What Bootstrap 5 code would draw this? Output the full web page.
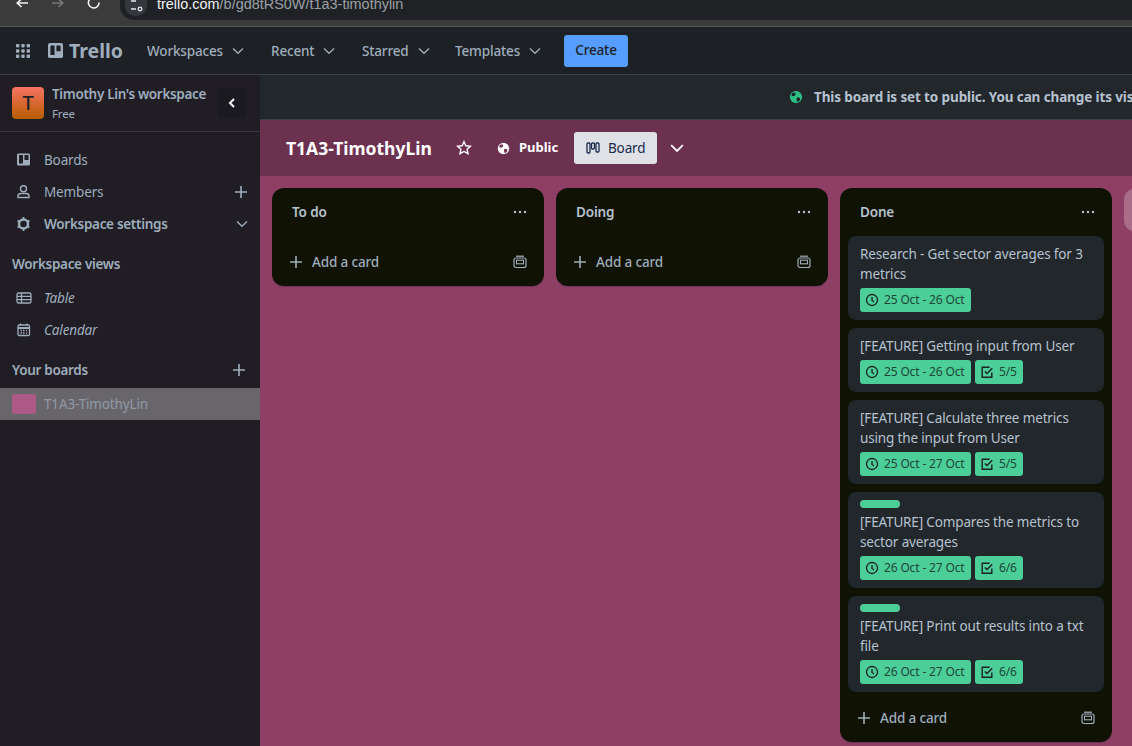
<!DOCTYPE html>
<html lang="en">
<head>
<meta charset="UTF-8">
<meta name="viewport" content="width=device-width, initial-scale=1.0">
<title>T1A3-TimothyLin | Trello</title>
<link href="https://cdn.jsdelivr.net/npm/bootstrap@5.3.3/dist/css/bootstrap.min.css" rel="stylesheet">
<style>
html, body { height: 100%; }
body { font-family: "Noto Sans", "Liberation Sans", sans-serif; font-size: 13.5px; letter-spacing: -.15px; background: #1d2125; color: #9fadbc; overflow: hidden; }
svg { display: block; flex: none; }
.app-shell { width: 1132px; height: 746px; }

.browser-bar { height: 27px; background: #3b3b3b; border-bottom: 1px solid #5a5a5a; padding-left: 15px; }
.browser-btns { width: 105px; gap: 22px; height: 10px; }
.url-pill { background: #1f2124; height: 20px; border-radius: 0 0 0 14px; padding-left: 5px; color: #9aa0a6; font-family: "Liberation Sans", sans-serif; font-size: 14.45px; line-height: 8px; letter-spacing: 0; }
.url-badge { width: 22px; height: 16px; background: #34373b; border-radius: 0 0 10px 10px; margin-right: 10px; padding-left: 5px; }
.url-text { margin-top: -4px; height: 16px; line-height: 16px; }
.url-host { color: #f1f3f4; }

.top-bar { height: 48px; background: #1d2125; border-bottom: 1px solid #38414a; padding-left: 15px; font-weight: 500; }
.trello-mark { color: #9fadbc; font-size: 19.5px; font-weight: 700; margin-left: 17px; margin-right: 24px; gap: 6px; width: 75px; letter-spacing: 0; }
.top-item { gap: 9px; color: #9fadbc; white-space: nowrap; padding-top: 2px; }
.top-item.ws { width: 124px; } .top-item.rc { width: 91px; } .top-item.st { width: 93px; } .top-item.tp { width: 109px; }
.top-item svg { margin-top: -1px; }
.create-btn { background: #579dff; color: #1d2125; width: 64px; height: 32px; border-radius: 3px; font-size: 13.5px; font-weight: 500; padding: 0; border: 0; letter-spacing: -.15px; }

.side-nav { width: 260px; flex: none; background: #201d25; height: 100%; }
.side-head { height: 57px; border-bottom: 1px solid #38353f; padding: 0 14px 0 12px; }
.ws-avatar { width: 32px; height: 32px; border-radius: 4px; background: linear-gradient(#f87462, #b65c02); color: #1d2125; font-size: 20px; line-height: 32px; text-align: center; font-weight: 500; flex: none; }
.ws-name { font-weight: 600; font-size: 13.5px; line-height: 20px; color: #9fadbc; white-space: nowrap; letter-spacing: -.33px; padding-top: 1px; }
.ws-plan { font-size: 11.5px; line-height: 20px; color: #9fadbc; }
.collapse-btn { width: 28px; height: 30px; background: #1b1a20; border-radius: 3px; color: #fff; margin-left: auto; }
.nav-list { padding-top: 12px; }
.nav-row { height: 32px; padding-left: 16px; padding-right: 12px; gap: 12px; color: #9fadbc; }
.nav-row.strong { font-weight: 600; letter-spacing: -.3px; }
.nav-row .nav-end { margin-left: auto; }
.nav-title { font-weight: 600; height: 32px; padding: 0 14px 0 12px; color: #9fadbc; letter-spacing: -.3px; }
.views-title { margin-top: 8px; margin-bottom: 2px; }
.boards-title { margin-top: 8px; margin-bottom: 2px; }
.views-row { font-style: italic; height: 32px; padding-left: 16px; gap: 12px; color: #9fadbc; }
.board-row { height: 32px; background: #69666b; padding-left: 12px; gap: 8px; color: #8f9aa5; }
.board-swatch { width: 24px; height: 20px; border-radius: 2px; background: #ad5a86; }

.public-bar { height: 45px; flex: none; background: #22272b; border-bottom: 1px solid #38414a; padding-left: 529px; gap: 11px; font-weight: 700; font-size: 13.5px; letter-spacing: -.12px; white-space: nowrap; overflow: hidden; color: #b6c2cf; }
.public-globe { color: #2dbe83; }
.board-area { background: #8f3f65; min-width: 0; }
.board-head { height: 56px; flex: none; background: #6d3150; padding-left: 26px; color: #fff; }
.board-name { font-size: 17.5px; font-weight: 700; width: 170px; white-space: nowrap; letter-spacing: 0; }
.board-public { font-weight: 700; font-size: 13px; gap: 9px; width: 69px; margin-left: 25px; letter-spacing: 0; }
.board-tab { background: #dfe1e6; color: #172b4d; width: 83px; height: 32px; border-radius: 3px; padding-left: 12px; gap: 8px; }
.board-more { margin-left: 13px; }

.lists { padding: 12px 12px 0; gap: 12px; overflow: hidden; }
.task-list { width: 272px; flex: none; background: #101204; border-radius: 12px; box-shadow: 0 1px 1px rgba(9,30,66,.3); align-self: flex-start; }
.list-head { height: 48px; padding: 0 17px 0 20px; font-weight: 600; color: #b6c2cf; }
.list-foot { height: 36px; margin: 8px 0 6px; padding: 0 17px; gap: 9px; font-weight: 500; color: #9fadbc; }
.list-foot .foot-tpl { margin-left: auto; }
.task-stack { padding: 0 8px; gap: 8px; }
.task-card { background: #22272b; border-radius: 8px; padding: 8px 12px; color: #b6c2cf; line-height: 20px; }
.task-label { width: 40px; height: 8px; border-radius: 4px; background: #4bce97; margin-bottom: 4px; }
.task-meta { gap: 4px; margin-top: 4px; }
.date-chip { background: #4bce97; color: #20463a; height: 24px; border-radius: 3px; padding: 0 5px; gap: 5px; font-size: 12px; white-space: nowrap; }
.date-chip svg { color: #1d2125; }
.date-chip.range { width: 111px; }
.date-chip.checks { width: 48px; }
.add-list { width: 272px; height: 44px; flex: none; background: rgba(255,255,255,.24); border-radius: 12px; }
</style>
</head>
<body>
<svg width="0" height="0" class="position-absolute">
  <symbol id="chev" viewBox="0 0 12 12"><path d="M1 3.500 6 8.300l5-4.800" fill="none" stroke="currentColor" stroke-width="1.300"/></symbol>
  <symbol id="plus" viewBox="0 0 14 14"><path d="M7 1v12M1 7h12" stroke="currentColor" stroke-width="1.600"/></symbol>
  <symbol id="clock" viewBox="0 0 16 16"><circle cx="8" cy="8" r="6.300" fill="none" stroke="currentColor" stroke-width="1.500"/><path d="M8 4.500V8.500l2.400 1.600" fill="none" stroke="currentColor" stroke-width="1.500"/></symbol>
  <symbol id="check" viewBox="0 0 16 16"><path d="M13.500 8.500V14H2.500V2.500H11" fill="none" stroke="currentColor" stroke-width="1.600"/><path d="M5.500 7.300 8 9.800l6-6" fill="none" stroke="currentColor" stroke-width="1.600"/></symbol>
  <symbol id="dots" viewBox="0 0 14 4"><circle cx="2" cy="2" r="1.200" fill="currentColor"/><circle cx="7" cy="2" r="1.200" fill="currentColor"/><circle cx="12" cy="2" r="1.200" fill="currentColor"/></symbol>
  <symbol id="tpl" viewBox="0 0 14 14"><path d="M3 1.200h8" stroke="currentColor" stroke-width="1.200"/><rect x="1" y="3" width="12" height="9.500" rx="2" fill="none" stroke="currentColor" stroke-width="1.200"/><rect x="3.500" y="5.200" width="7" height="3.600" fill="none" stroke="currentColor" stroke-width="1.100"/></symbol>
  <symbol id="globe" viewBox="0 0 16 16"><circle cx="8" cy="8" r="7" fill="currentColor"/><path d="M4 3.200 6.800 3l1 1.600L6.600 6.500 4.600 7 2.600 6.300ZM9.200 8.400l3.200.6.400 2-2.200 2.500-1.400-.3-.6-2.600Z" fill="#1d2125"/></symbol>
  <symbol id="globe-light" viewBox="0 0 16 16"><circle cx="8" cy="8" r="7" fill="currentColor"/><path d="M4 3.200 6.800 3l1 1.600L6.600 6.500 4.600 7 2.600 6.300ZM9.200 8.400l3.200.6.400 2-2.200 2.500-1.400-.3-.6-2.600Z" fill="#6d3150"/></symbol>
  <symbol id="logo" viewBox="0 0 16 16"><rect width="16" height="16" rx="2" fill="currentColor"/><rect x="2.600" y="2.600" width="4.400" height="10.200" rx=".6" fill="#1d2125"/><rect x="9" y="2.600" width="4.400" height="6.200" rx=".6" fill="#1d2125"/></symbol>
</svg>

<div class="app-shell d-flex flex-column">
  <div class="browser-bar d-flex flex-none">
    <div class="browser-btns d-flex">
      <svg width="14" height="10" viewBox="0 0 14 10"><path d="M13 3H3M6.500 -1 2.200 3l4.300 4" fill="none" stroke="#f1f3f4" stroke-width="1.600"/></svg>
      <svg width="14" height="10" viewBox="0 0 14 10"><path d="M1 3h10M7.500 -1l4.300 4-4.300 4" fill="none" stroke="#75787b" stroke-width="1.600"/></svg>
      <svg width="14" height="10" viewBox="0 0 14 10"><path d="M12 2.500A5.300 5.300 0 1 1 10.500 -1" fill="none" stroke="#f1f3f4" stroke-width="1.600"/></svg>
    </div>
    <div class="url-pill flex-grow-1 d-flex">
      <div class="url-badge"><svg width="14" height="14" viewBox="0 0 14 14"><path d="M1 1h5M1 9h5" stroke="#e8eaed" stroke-width="1.400"/><circle cx="10" cy="9" r="1.800" fill="none" stroke="#e8eaed" stroke-width="1.300"/></svg></div>
      <div class="url-text"><span class="url-host">trello.com</span>/b/gd8tRS0W/t1a3-timothylin</div>
    </div>
  </div>

  <nav class="top-bar d-flex align-items-center flex-none">
    <svg width="16" height="16" viewBox="0 0 16 16" fill="#9fadbc"><rect x="1" y="1" width="3.400" height="3.400" rx=".8"/><rect x="6.300" y="1" width="3.400" height="3.400" rx=".8"/><rect x="11.600" y="1" width="3.400" height="3.400" rx=".8"/><rect x="1" y="6.300" width="3.400" height="3.400" rx=".8"/><rect x="6.300" y="6.300" width="3.400" height="3.400" rx=".8"/><rect x="11.600" y="6.300" width="3.400" height="3.400" rx=".8"/><rect x="1" y="11.600" width="3.400" height="3.400" rx=".8"/><rect x="6.300" y="11.600" width="3.400" height="3.400" rx=".8"/><rect x="11.600" y="11.600" width="3.400" height="3.400" rx=".8"/></svg>
    <div class="trello-mark d-flex align-items-center"><svg width="15" height="15"><use href="#logo"/></svg><span>Trello</span></div>
    <div class="top-item ws d-flex align-items-center">Workspaces <svg width="12" height="12"><use href="#chev"/></svg></div>
    <div class="top-item rc d-flex align-items-center">Recent <svg width="12" height="12"><use href="#chev"/></svg></div>
    <div class="top-item st d-flex align-items-center">Starred <svg width="12" height="12"><use href="#chev"/></svg></div>
    <div class="top-item tp d-flex align-items-center">Templates <svg width="12" height="12"><use href="#chev"/></svg></div>
    <button class="btn create-btn" type="button">Create</button>
  </nav>

  <div class="d-flex flex-grow-1 overflow-hidden">
    <aside class="side-nav">
      <div class="side-head d-flex align-items-center gap-2">
        <div class="ws-avatar">T</div>
        <div>
          <div class="ws-name">Timothy Lin's workspace</div>
          <div class="ws-plan">Free</div>
        </div>
        <div class="collapse-btn d-flex align-items-center justify-content-center"><svg width="10" height="12" viewBox="0 0 10 12"><path d="M7 2 3 6l4 4" fill="none" stroke="#fff" stroke-width="2"/></svg></div>
      </div>
      <div class="nav-list">
        <div class="nav-row d-flex align-items-center"><svg width="16" height="16" viewBox="0 0 16 16"><rect x="1" y="1.500" width="13" height="12" rx="1.500" fill="#9fadbc"/><rect x="3" y="3" width="4" height="8.500" fill="#201d25"/><rect x="8.500" y="3" width="4" height="5" fill="#201d25"/></svg>Boards</div>
        <div class="nav-row d-flex align-items-center"><svg width="16" height="16" viewBox="0 0 16 16" fill="none" stroke="#9fadbc" stroke-width="1.400"><circle cx="7.500" cy="4.800" r="3"/><path d="M2 13.500v-1.500c0-1.600 1.400-2.500 3-2.500h5c1.600 0 3 .9 3 2.500v1.500Z"/></svg>Members<svg class="nav-end" width="14" height="14"><use href="#plus"/></svg></div>
        <div class="nav-row strong d-flex align-items-center"><svg width="16" height="16" viewBox="0 0 16 16"><circle cx="7.500" cy="8" r="4.500" fill="none" stroke="#9fadbc" stroke-width="2.400"/><path d="M7.500 1v14M1.500 4.500l12 7M13.500 4.500l-12 7" stroke="#9fadbc" stroke-width="1.800" stroke-dasharray="2.200 9.600 2.200"/></svg>Workspace settings<svg class="nav-end" width="12" height="12"><use href="#chev"/></svg></div>
      </div>
      <div class="nav-title views-title d-flex align-items-center">Workspace views</div>
      <div class="views-row d-flex align-items-center"><svg width="16" height="16" viewBox="0 0 16 16" fill="none" stroke="#9fadbc" stroke-width="1.300"><rect x="1" y="3" width="14" height="10" rx="1.500"/><path d="M1 6.300h14M1 9.700h14M5.500 3v10"/></svg>Table</div>
      <div class="views-row d-flex align-items-center"><svg width="16" height="16" viewBox="0 0 16 16" fill="none" stroke="#9fadbc" stroke-width="1.300"><rect x="2" y="3" width="11.500" height="10.500" rx="1.200"/><path d="M2 6h11.500" stroke-width="2"/><path d="M4.500 1.500v2M11 1.500v2M4.500 8.500h1.500M7 8.500h1.500M10 8.500h1M4.500 11h1.500M7 11h1.500M10 11h1"/></svg>Calendar</div>
      <div class="nav-title boards-title d-flex align-items-center justify-content-between">Your boards <svg width="14" height="14"><use href="#plus"/></svg></div>
      <div class="board-row d-flex align-items-center"><span class="board-swatch"></span>T1A3-TimothyLin</div>
    </aside>

    <main class="board-area flex-grow-1 d-flex flex-column">
      <div class="public-bar d-flex align-items-center"><svg class="public-globe" width="14" height="14"><use href="#globe"/></svg><span>This board is set to public. You can change its visibility setting at any time.</span></div>
      <div class="board-head d-flex align-items-center">
        <div class="board-name">T1A3-TimothyLin</div>
        <svg width="16" height="16" viewBox="0 0 16 16"><path d="M8 1.700 9.900 5.800l4.500.5-3.300 3 .9 4.400L8 11.500l-4 2.200.9-4.400-3.300-3 4.500-.5Z" fill="none" stroke="#fff" stroke-width="1.400"/></svg>
        <div class="board-public d-flex align-items-center"><svg width="13" height="13"><use href="#globe-light"/></svg>Public</div>
        <div class="board-tab d-flex align-items-center ms-2"><svg width="14" height="14" viewBox="0 0 14 14" fill="none" stroke="#172b4d" stroke-width="1.300"><rect x="1" y="2" width="3" height="10" rx="1"/><rect x="5.500" y="2" width="3" height="6" rx="1"/><rect x="10" y="2" width="3" height="9" rx="1"/></svg>Board</div>
        <svg class="board-more" width="14" height="14" viewBox="0 0 12 12"><path d="M1 3.500 6 8.500l5-5" fill="none" stroke="#fff" stroke-width="1.500"/></svg>
      </div>

      <div class="lists d-flex flex-grow-1">
        <section class="task-list">
          <div class="list-head d-flex align-items-center justify-content-between">To do <svg width="14" height="4"><use href="#dots"/></svg></div>
          <div class="list-foot d-flex align-items-center"><svg width="14" height="14"><use href="#plus"/></svg>Add a card<svg class="foot-tpl" width="14" height="14"><use href="#tpl"/></svg></div>
        </section>
        <section class="task-list">
          <div class="list-head d-flex align-items-center justify-content-between">Doing <svg width="14" height="4"><use href="#dots"/></svg></div>
          <div class="list-foot d-flex align-items-center"><svg width="14" height="14"><use href="#plus"/></svg>Add a card<svg class="foot-tpl" width="14" height="14"><use href="#tpl"/></svg></div>
        </section>
        <section class="task-list">
          <div class="list-head d-flex align-items-center justify-content-between">Done <svg width="14" height="4"><use href="#dots"/></svg></div>
          <div class="task-stack d-flex flex-column">
            <article class="task-card">
              Research - Get sector averages for 3 metrics
              <div class="task-meta d-flex"><span class="date-chip range d-flex align-items-center"><svg width="14" height="14"><use href="#clock"/></svg>25 Oct - 26 Oct</span></div>
            </article>
            <article class="task-card">
              [FEATURE] Getting input from User
              <div class="task-meta d-flex"><span class="date-chip range d-flex align-items-center"><svg width="14" height="14"><use href="#clock"/></svg>25 Oct - 26 Oct</span><span class="date-chip checks d-flex align-items-center"><svg width="14" height="14"><use href="#check"/></svg>5/5</span></div>
            </article>
            <article class="task-card">
              [FEATURE] Calculate three metrics using the input from User
              <div class="task-meta d-flex"><span class="date-chip range d-flex align-items-center"><svg width="14" height="14"><use href="#clock"/></svg>25 Oct - 27 Oct</span><span class="date-chip checks d-flex align-items-center"><svg width="14" height="14"><use href="#check"/></svg>5/5</span></div>
            </article>
            <article class="task-card">
              <div class="task-label"></div>
              [FEATURE] Compares the metrics to sector averages
              <div class="task-meta d-flex"><span class="date-chip range d-flex align-items-center"><svg width="14" height="14"><use href="#clock"/></svg>26 Oct - 27 Oct</span><span class="date-chip checks d-flex align-items-center"><svg width="14" height="14"><use href="#check"/></svg>6/6</span></div>
            </article>
            <article class="task-card">
              <div class="task-label"></div>
              [FEATURE] Print out results into a txt file
              <div class="task-meta d-flex"><span class="date-chip range d-flex align-items-center"><svg width="14" height="14"><use href="#clock"/></svg>26 Oct - 27 Oct</span><span class="date-chip checks d-flex align-items-center"><svg width="14" height="14"><use href="#check"/></svg>6/6</span></div>
            </article>
          </div>
          <div class="list-foot d-flex align-items-center"><svg width="14" height="14"><use href="#plus"/></svg>Add a card<svg class="foot-tpl" width="14" height="14"><use href="#tpl"/></svg></div>
        </section>
        <div class="add-list"></div>
      </div>
    </main>
  </div>
</div>
<script src="https://cdn.jsdelivr.net/npm/bootstrap@5.3.3/dist/js/bootstrap.bundle.min.js"></script>
</body>
</html>
